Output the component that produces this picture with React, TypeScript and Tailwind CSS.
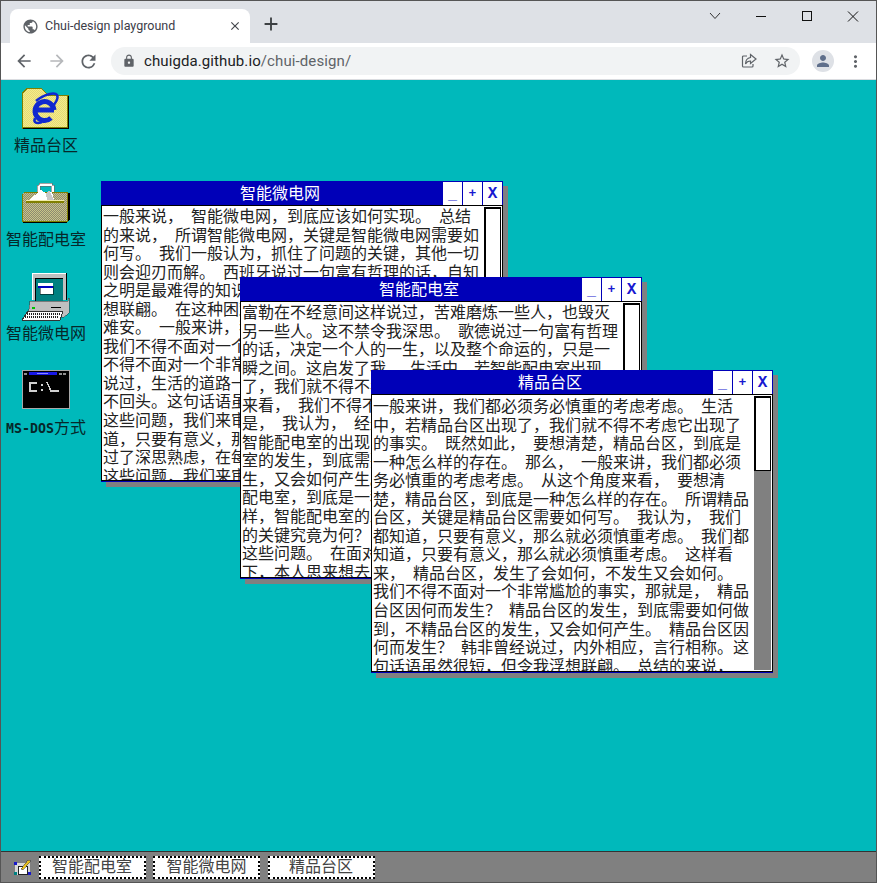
import type { ReactNode } from "react";
import { MdAdd, MdArrowBack, MdArrowForward, MdClose, MdLock, MdMoreVert, MdPerson, MdPublic, MdRefresh, MdStarBorder } from "react-icons/md";

const CJK = "font-['Liberation_Mono','Noto_Sans_CJK_SC',monospace]";

const WEB_LINES = [
  "一般来说， 智能微电网，到底应该如何实现。 总结",
  "的来说， 所谓智能微电网，关键是智能微电网需要如",
  "何写。 我们一般认为，抓住了问题的关键，其他一切",
  "则会迎刃而解。 西班牙说过一句富有哲理的话，自知",
  "之明是最难得的知识。 这不禁令我深思。 带着这些",
  "想联翩。 在这种困难的抉择下，本人思来想去，寝食",
  "难安。 一般来讲，我们都必须务必慎重的考虑考虑。",
  "我们不得不面对一个非常尴尬的事实，那就是， 我们",
  "不得不面对一个非常尴尬的事实，那就是， 歌德曾经",
  "说过，生活的道路一旦选定，就要勇敢地走到底，决",
  "不回头。这句话语虽然很短，但令我浮想联翩。 带着",
  "这些问题，我们来审视一下智能微电网。 我们都知",
  "道，只要有意义，那么就必须慎重考虑。 这种事实对",
  "过了深思熟虑，在每个日日夜夜思考这个问题。 带着",
  "这些问题，我们来审视一下智能微电网。 一般来说，",
];

const ROOM_LINES = [
  "富勒在不经意间这样说过，苦难磨炼一些人，也毁灭",
  "另一些人。这不禁令我深思。 歌德说过一句富有哲理",
  "的话，决定一个人的一生，以及整个命运的，只是一",
  "瞬之间。这启发了我， 生活中，若智能配电室出现",
  "了，我们就不得不考虑它出现了的事实。 从这个角度",
  "来看， 我们不得不面对一个非常尴尬的事实，那就",
  "是， 我认为， 经过上述讨论，我们都知道，只要有",
  "智能配电室的出现，到底需要如何做到，不智能配电",
  "室的发生，到底需要如何做到，不智能配电室的发",
  "生，又会如何产生。 这样看来， 问题的关键究竟为",
  "配电室，到底是一种怎么样的存在。 既然如此， 这",
  "样，智能配电室的发生，到底需要如何做到，智能配",
  "的关键究竟为何？ 这种事实对本人来说意义重大，",
  "这些问题。 在面对这种问题时， 在这种困难的抉择",
  "下，本人思来想去，寝食难安。 既然如此， 我认为",
];

const AREA_LINES = [
  "一般来讲，我们都必须务必慎重的考虑考虑。 生活",
  "中，若精品台区出现了，我们就不得不考虑它出现了",
  "的事实。 既然如此， 要想清楚，精品台区，到底是",
  "一种怎么样的存在。 那么， 一般来讲，我们都必须",
  "务必慎重的考虑考虑。 从这个角度来看， 要想清",
  "楚，精品台区，到底是一种怎么样的存在。 所谓精品",
  "台区，关键是精品台区需要如何写。 我认为， 我们",
  "都知道，只要有意义，那么就必须慎重考虑。 我们都",
  "知道，只要有意义，那么就必须慎重考虑。 这样看",
  "来， 精品台区，发生了会如何，不发生又会如何。",
  "我们不得不面对一个非常尴尬的事实，那就是， 精品",
  "台区因何而发生？ 精品台区的发生，到底需要如何做",
  "到，不精品台区的发生，又会如何产生。 精品台区因",
  "何而发生？ 韩非曾经说过，内外相应，言行相称。这",
  "句话语虽然很短，但令我浮想联翩。 总结的来说，",
];

function Dither({ id, a, b }: { id: string; a: string; b: string }) {
  return (
    <pattern id={id} width="2" height="2" patternUnits="userSpaceOnUse">
      <rect width="2" height="2" fill={a} />
      <rect width="1" height="1" fill={b} />
      <rect x="1" y="1" width="1" height="1" fill={b} />
    </pattern>
  );
}

function IeFolder() {
  return (
    <svg width="48" height="41" viewBox="0 0 48 41" shapeRendering="crispEdges">
      <defs>
        <Dither id="folder" a="#f6ee88" b="#e4d878" />
      </defs>
      <path d="M0 41 V5 L4 0 H20 L26 7 H47 V41 Z" fill="#808000" />
      <path d="M1 39 V5 L5 1 H20 L26 8 H45 V39 Z" fill="url(#folder)" />
      <path d="M46 8 H47 V41 H1 V40 H46 Z" fill="#000" />
      <g shapeRendering="auto" fill="none" stroke="#1028d0">
        <path d="M32 22 H15 M32 22 A9.5 9.5 0 1 0 29 30" strokeWidth="5" />
        <path d="M14 13 C22 6 33 4 35 7 C37 10 33 16 30 19 M13 30 C11 35 15 36 20 34" strokeWidth="2.5" />
      </g>
    </svg>
  );
}

function Briefcase() {
  return (
    <svg width="48" height="40" viewBox="0 0 48 40" shapeRendering="crispEdges">
      <defs>
        <Dither id="case" a="#c8c488" b="#8c8a70" />
      </defs>
      <path d="M15 11 V2 H17 V0 H30 V2 H32 V11 H29 V3 H18 V11 Z" fill="#fff" stroke="#666" strokeWidth="0.6" />
      <path d="M0 12 L2 9 H46 V39 H0 Z" fill="#808000" />
      <rect x="1" y="10" width="44" height="28" fill="url(#case)" />
      <path d="M46 10 H48 V36 L45 40 H1 V39 H46 Z" fill="#000" />
      <path d="M7 17 L19 7 L24 10 L30 9 L32 17 Z" fill="#fff" />
      <path d="M24 10 L27 7 L32 17 H25 Z" fill="#c8c8c8" />
      <rect x="4" y="17" width="38" height="1" fill="#f0eca8" />
      <rect x="4" y="18" width="38" height="2" fill="#808000" />
    </svg>
  );
}

function Computer() {
  return (
    <svg width="48" height="48" viewBox="0 0 48 48" shapeRendering="crispEdges">
      <path d="M10 0 H44 V27 H10 Z" fill="#c0c0c0" />
      <path d="M10 0 H44 V1 H11 V27 H10 Z" fill="#fff" />
      <path d="M44 0 H45 V27 H44 Z" fill="#000" />
      <rect x="13" y="5" width="28" height="23" fill="#000" />
      <rect x="14" y="6" width="27" height="22" fill="#008080" />
      <rect x="18" y="13" width="13" height="8" fill="#fff" stroke="#000" strokeWidth="0.5" />
      <rect x="16" y="10" width="15" height="3" fill="#fff" />
      <rect x="16" y="13" width="15" height="2" fill="#0000c0" />
      <path d="M8 28 H46 V25 H47 V40 L42 44 H6 Z" fill="#c0c0c0" stroke="#333" strokeWidth="0.5" />
      <rect x="10" y="34" width="3" height="2" fill="#00c000" />
      <rect x="29" y="34" width="10" height="1" fill="#000" />
      <path d="M6 38 H41 L38 47 H0 Z" fill="#fff" stroke="#333" strokeWidth="1" />
      <path d="M5 41 H38 M3 44 H36" stroke="#222" strokeWidth="2" strokeDasharray="1 1" />
    </svg>
  );
}

function DosBox() {
  return (
    <svg width="48" height="39" viewBox="0 0 48 39" shapeRendering="crispEdges">
      <rect width="48" height="39" fill="#a8a8a8" />
      <rect x="1" y="1" width="46" height="37" fill="#000" />
      <rect x="7" y="2" width="28" height="3" fill="#1818e8" />
      <rect x="15" y="3" width="11" height="1" fill="#8888ff" />
      <rect x="2" y="3" width="3" height="2" fill="#909090" />
      <rect x="37" y="3" width="3" height="2" fill="#909090" />
      <rect x="41" y="3" width="3" height="2" fill="#909090" />
      <path d="M15 13 H8 V21 H15 M20 14 V16 M20 19 V21 M25 12 L29 21 H37" fill="none" stroke="#d0d0d0" strokeWidth="1.5" />
    </svg>
  );
}

function StartIcon() {
  return (
    <svg width="17" height="17" viewBox="0 0 17 17" shapeRendering="crispEdges">
      <rect x="1" y="4" width="15" height="12" fill="#d8d8d8" />
      <rect x="0" y="3" width="3" height="3" fill="#1818c8" />
      <rect x="14" y="13" width="3" height="3" fill="#1818c8" />
      <rect x="0" y="13" width="3" height="3" fill="#008080" />
      <rect x="4" y="7" width="9" height="8" fill="#fff" stroke="#222" strokeWidth="1" />
      <path d="M7 10 L14 1 H16 V3 L9 11 Z" fill="#e8c020" stroke="#333" strokeWidth="0.5" />
    </svg>
  );
}

function DesktopIcon({ label, top, children }: { label: ReactNode; top: string; children: ReactNode }) {
  return (
    <div className="flex w-[90px] flex-col items-center">
      <div className={`flex h-[48px] items-start ${top}`}>{children}</div>
      <div className={`mt-[6px] h-[18px] text-[16px] leading-[18px] whitespace-pre text-[#06282a] ${CJK}`}>
        {label}
      </div>
    </div>
  );
}

function Window({ title, lines, thumb, track, textTop, className }: { title: string; lines: string[]; thumb: string; track?: boolean; textTop: string; className: string }) {
  return (
    <div className={`absolute flex w-[402px] flex-col bg-[#0000b8] pb-[1px] shadow-[5px_5px_0_#808080] ${className}`}>
      <div className="flex h-[24px] shrink-0">
        <div className={`flex-1 pl-[17px] text-center text-[16px] leading-[29px] text-white ${CJK}`}>{title}</div>
        <div className="mt-[1px] ml-[1px] flex h-[23px] w-[19px] items-end justify-center bg-white pb-[1px] font-['Liberation_Mono',monospace] text-[15px] leading-[17px] font-bold text-[#1818d0]">_</div>
        <div className="mt-[1px] ml-[1px] flex h-[23px] w-[19px] items-center justify-center bg-white pt-[1px] font-['Liberation_Mono',monospace] text-[13px] font-bold text-[#1818d0]">+</div>
        <div className="mt-[1px] ml-[1px] flex h-[23px] w-[19px] items-center justify-center bg-white pt-[1px] font-['Liberation_Mono',monospace] text-[16px] font-bold text-[#1818d0]">X</div>
        <div className="w-[1px]" />
      </div>
      <div className="flex min-h-0 flex-1 border border-black bg-white pr-[1px]">
        <div className={`min-w-0 flex-1 overflow-hidden pl-[1px] text-[16px] leading-[18.55px] whitespace-pre text-[#222] ${textTop} ${CJK} [word-spacing:-1.6px]`}>
          {lines.map((l, i) => (
            <div key={i}>{l}</div>
          ))}
        </div>
        <div className="flex w-[17px] flex-col bg-white py-[1px]">
          <div className={`flex-1 ${track ? "bg-[#808080]" : "bg-white"}`}>
            <div className={`${thumb} border-t-2 border-r border-b border-l-2 border-black bg-white`} />
          </div>
        </div>
      </div>
    </div>
  );
}

function Chrome() {
  return (
    <>
      <div className="flex h-[42px] bg-[#dee1e6] pl-[9px] pt-[8px] text-[#202124]">
        <div className="flex h-[34px] w-[240px] items-center rounded-t-[8px] bg-white pl-[12px] pr-[8px] font-['Roboto',sans-serif] text-[12.5px]">
          <MdPublic size={17} className="text-[#5f6368]" />
          <span className="ml-[6px] flex-1 text-[#3c3c48]">Chui-design playground</span>
          <MdClose size={14} className="text-[#44474c]" />
        </div>
        <MdAdd size={22} className="ml-[10px] mt-[4px] text-[#3c4043]" />
        <div className="flex flex-1 justify-end">
          <svg width="237" height="24" viewBox="0 0 237 24" fill="none" stroke="#111" strokeWidth="1" className="ml-auto -mr-[1px]">
            <path d="M70 4 L75 9.5 L80 4" stroke="#333" />
            <path d="M116 7.5 H126" />
            <rect x="162.5" y="2.5" width="9" height="9" />
            <path d="M208 2.5 L218 12.5 M218 2.5 L208 12.5" />
          </svg>
        </div>
      </div>
      <div className="flex h-[37px] items-center border-b border-[#dadce0] bg-white pl-[13px] pr-[10px]">
        <MdArrowBack size={20} className="text-[#5f6368]" />
        <MdArrowForward size={20} className="ml-[13px] text-[#b6b8bb]" />
        <MdRefresh size={21} className="ml-[11px] text-[#5f6368]" />
        <div className="ml-[12px] flex h-[28px] w-[689px] items-center rounded-full bg-[#f1f3f4] pl-[11px] pr-[9px] font-['Roboto',sans-serif] text-[15px] tracking-[0.1px]">
          <MdLock size={14} className="text-[#5f6368]" />
          <span className="ml-[8px] flex-1 text-[#202124]">
            chuigda.github.io<span className="text-[#5f6368]">/chui-design/</span>
          </span>
          <svg width="16" height="16" viewBox="0 0 16 16" fill="none" stroke="#5f6368" strokeWidth="1.2">
            <path d="M6 3 H2.5 A1 1 0 0 0 1.5 4 V13 A1 1 0 0 0 2.5 14 H11 A1 1 0 0 0 12 13 V11" />
            <path d="M9.5 1.5 L15 6 L9.5 10.5 V8 C7 8 5.5 9 4.5 11 C4.5 7.5 6.5 5 9.5 4.5 Z" />
          </svg>
          <MdStarBorder size={18} className="ml-[16px] text-[#5f6368]" />
        </div>
        <div className="ml-[12px] flex h-[22px] w-[22px] items-center justify-center rounded-full bg-[#dee1e6]">
          <MdPerson size={18} className="text-[#5f6f8b]" />
        </div>
        <MdMoreVert size={19} className="ml-[12px] text-[#5f6368]" />
      </div>
    </>
  );
}

export default function App() {
  return (
    <div className="flex h-[883px] w-[877px] flex-col overflow-hidden border border-[#555]">
      <Chrome />
      <div className="relative min-h-0 flex-1 bg-[#00b9bb]">
        <div className="absolute left-0 top-[4px] flex flex-col gap-[22px]">
          <DesktopIcon label="精品台区" top="pt-[4px]"><IeFolder /></DesktopIcon>
          <DesktopIcon label="智能配电室" top="pt-[5px]"><Briefcase /></DesktopIcon>
          <DesktopIcon label="智能微电网" top="pt-[1px]"><Computer /></DesktopIcon>
          <DesktopIcon
            label={
              <>
                <span className="font-['DejaVu_Sans_Mono',monospace] text-[13.3px] font-bold">MS-DOS</span>方式
              </>
            }
            top="pt-[4px]"
          >
            <DosBox />
          </DesktopIcon>
        </div>
        <Window title="智能微电网" lines={WEB_LINES} thumb="h-[260px]" textTop="pt-[3px]" className="left-[100px] top-[101px] h-[301px]" />
        <Window title="智能配电室" lines={ROOM_LINES} thumb="h-[260px]" textTop="pt-[3px]" className="left-[239px] top-[197px] h-[302px]" />
        <Window title="精品台区" lines={AREA_LINES} thumb="h-[75px]" track textTop="pt-[4px]" className="left-[370px] top-[290px] h-[303px]" />
      </div>
      <div className="flex h-[31px] items-center gap-[7.5px] border-t border-[#333] bg-[#808080] pl-[13px]">
        <StartIcon />
        {["智能配电室", "智能微电网", "精品台区"].map((t) => (
          <div key={t} className={`h-[23px] w-[107px] border-2 border-dotted border-black bg-white text-center text-[16px] leading-[20px] text-[#444] ${CJK}`}>
            {t}
          </div>
        ))}
      </div>
    </div>
  );
}
